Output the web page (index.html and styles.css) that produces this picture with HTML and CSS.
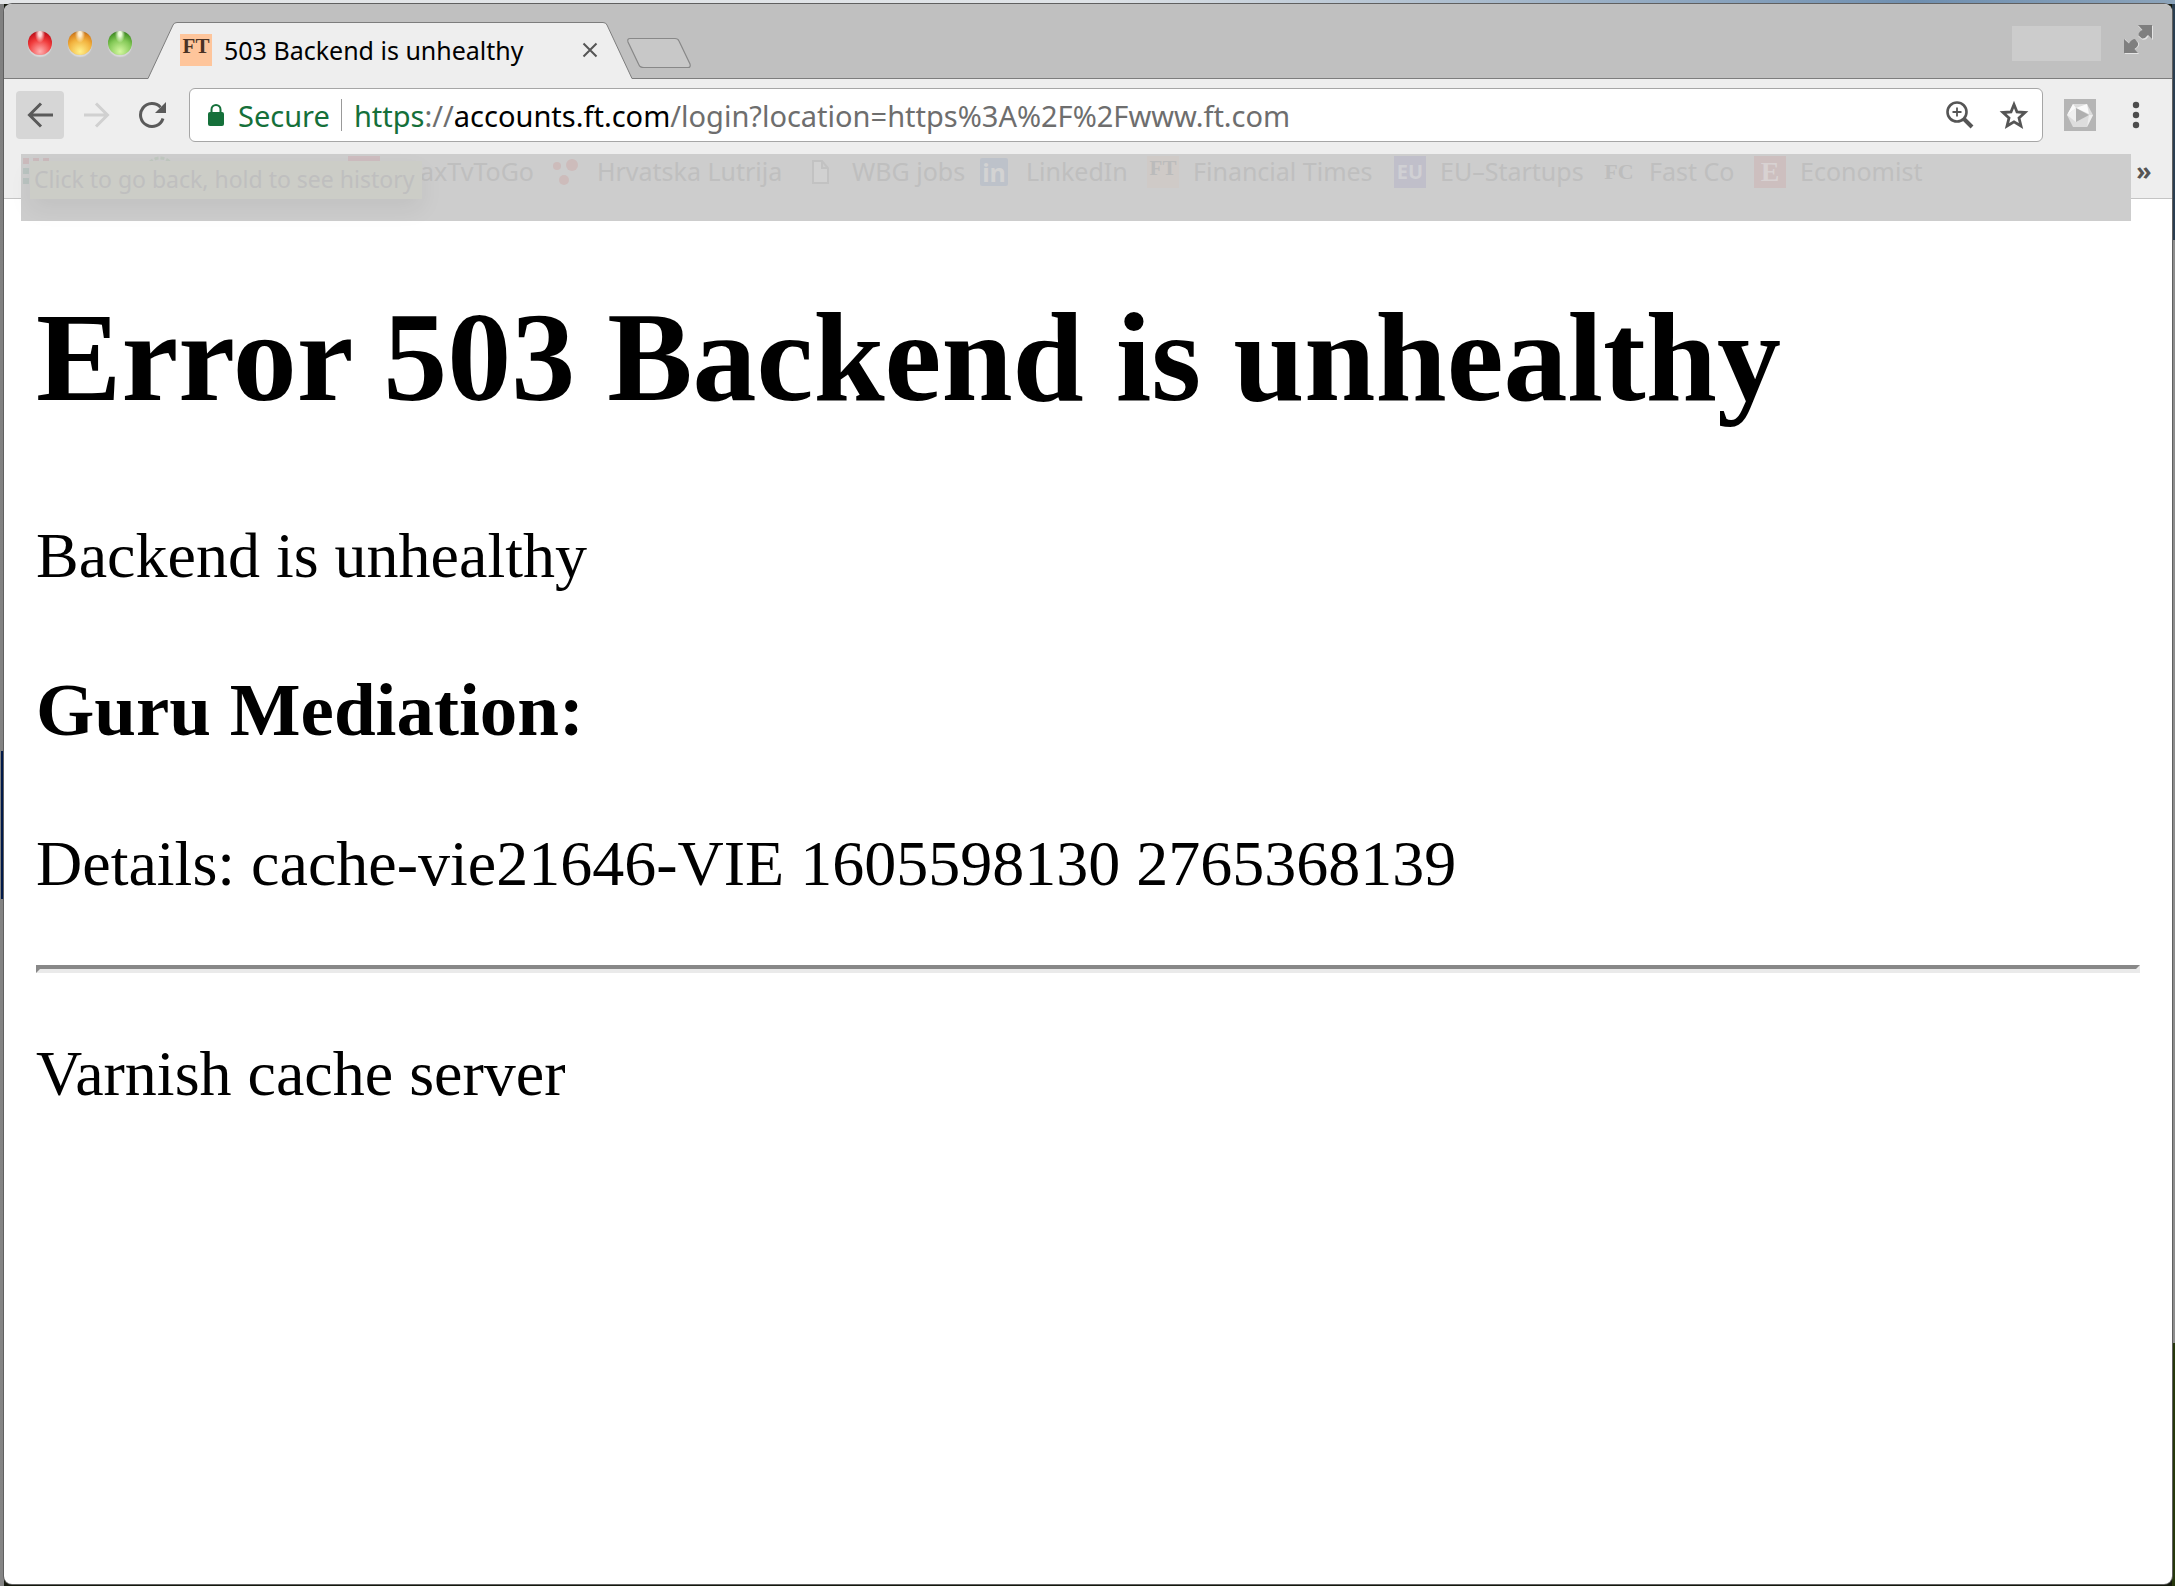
FILE: index.html
```html
<!DOCTYPE html>
<html lang="en">
<head>
<meta charset="utf-8">
<title>503 Backend is unhealthy</title>
<link rel="stylesheet" href="styles.css">
</head>
<body>
<div class="window">
  <header class="tabstrip">
    <div class="lights">
      <button class="light red" aria-label="Close window"></button>
      <button class="light amber" aria-label="Minimize window"></button>
      <button class="light green" aria-label="Zoom window"></button>
    </div>
    <div class="tab">
      <svg class="tab-shape" viewBox="0 0 486 57" preserveAspectRatio="none" aria-hidden="true"><path d="M0 56.5H1L26 3Q27 .5 30 .5H456Q459 .5 460 3L485 56.5H486V57H0Z" fill="#eee"/><path d="M0 56.5H1L26 3Q27 .5 30 .5H456Q459 .5 460 3L485 56.5H486" fill="none" stroke="#7d7d7d"/></svg>
      <span class="favicon">FT</span>
      <span class="tab-title">503 Backend is unhealthy</span>
      <button class="tab-close" aria-label="Close tab"><svg width="16" height="16" viewBox="0 0 16 16"><path d="M1.500 1.500 14.500 14.500M14.500 1.500 1.500 14.500" stroke="#555" stroke-width="2"/></svg></button>
    </div>
    <button class="new-tab" aria-label="New tab"><svg width="68" height="34" viewBox="0 0 68 34"><path d="M5 2.500H50Q53 2.500 54 5L65 28Q66 31.500 63 31.500H19Q15 31.500 14 29L3 6Q2 2.500 5 2.500Z" fill="#c8c8c8" stroke="#888" stroke-width="1.200"/></svg></button>
    <span class="profile"></span>
    <button class="fullscreen" aria-label="Full screen"><svg width="30" height="30" viewBox="0 0 30 30"><path d="M14 1H29V15L24.500 11Q22 16 18 14.500L14.500 11.500Q14 7.500 18.500 5.500Z M1 14V29H15L11 24.500Q16 21 15 18L11 14.500Q7.500 15 5.500 18.500Z" fill="#e4e4e4"/><path d="M14 0H28V14L24 10Q21 14 18 13.500L14.500 10.500Q14 7 18.500 5Z M0 14V28H14L10.500 24Q15 21 14 18L11 14Q7.500 14 5 18.500Z" fill="#7f7f7f"/></svg></button>
  </header>

  <div class="toolbar">
    <button class="nav-button active" aria-label="Back"><svg width="28" height="28" viewBox="0 0 28 28"><path d="M27 14H4M15 2.500 3.500 14 15 25.500" fill="none" stroke="#5a5a5a" stroke-width="3"/></svg></button>
    <button class="nav-button" aria-label="Forward"><svg width="28" height="28" viewBox="0 0 28 28"><path d="M2 14H25M14 2.500 25.500 14 14 25.500" fill="none" stroke="#d0d0d0" stroke-width="3"/></svg></button>
    <button class="nav-button" aria-label="Reload"><svg width="28" height="28" viewBox="0 0 28 28"><path d="M22.500 6.200A11.500 11.500 0 1 0 25 17.500" fill="none" stroke="#5a5a5a" stroke-width="3"/><path d="M28 1V12H17Z" fill="#5a5a5a"/></svg></button>
    <div class="omnibox">
      <svg width="16" height="22" viewBox="0 0 16 22" aria-hidden="true"><path d="M3.500 9V5.500a4.500 4.500 0 0 1 9 0V9" fill="none" stroke="#15703a" stroke-width="2"/><rect y="8" width="16" height="14" rx="2" fill="#15703a"/></svg>
      <span class="secure">Secure</span>
      <span class="divider"></span>
      <a class="url" href="#"><span class="scheme">https</span>://<span class="host">accounts.ft.com</span>/login?location=https%3A%2F%2Fwww.ft.com</a>
      <button class="box-button" aria-label="Zoom"><svg width="28" height="28" viewBox="0 0 28 28"><circle cx="11" cy="11" r="9.500" fill="none" stroke="#555" stroke-width="2.600"/><path d="M11 6.500V15.500M6.500 11H15.500" stroke="#555" stroke-width="1.800"/><path d="M17.500 17.500 26 26" stroke="#555" stroke-width="4"/></svg></button>
      <button class="box-button" aria-label="Bookmark this page"><svg width="30" height="30" viewBox="0 0 30 30"><path d="M15 4.500 18 12 26 12.500 20 18 22 26 15 21.800 8 26 10 18 4 12.500 12 12Z" fill="none" stroke="#555" stroke-width="2.800"/></svg></button>
    </div>
    <button class="extension" aria-label="Extension"><svg width="32" height="32" viewBox="0 0 32 32"><path fill="#b5b5b5" d="M0 0H32V32H0Z"/><path d="M9 5H23L29 16 23 28H9L3 16Z" fill="#ddd"/><path d="M9 5 3 16 12 9Z M12 9 23 5 25 15Z" fill="#fafafa"/><path d="M12 9V23L3 16Z" fill="#f0f0f0"/><path d="M12 9 25 16 12 23Z" fill="#b0b0b0"/><path d="M25 16 29 16 23 28Z" fill="#eee"/></svg></button>
    <button class="menu" aria-label="Menu"><svg width="8" height="28" viewBox="0 0 8 28"><g fill="#4d4d4d"><circle cx="4" cy="4" r="3.200"/><circle cx="4" cy="14" r="3.200"/><circle cx="4" cy="24" r="3.200"/></g></svg></button>
  </div>

  <div class="bookmark-row">
    <nav class="bookmarks" aria-label="Bookmarks">
      <a class="bookmark first" href="#"><svg class="apps" width="28" height="28" viewBox="0 0 28 28"><path fill="#cbbabc" d="M0 0H6V6H0ZM10 0H16V6H10ZM20 0H26V6H20Z"/><path fill="#b9c3c0" d="M0 10H6V16H0ZM0 20H6V26H0Z"/></svg><svg class="ring" width="32" height="32" viewBox="0 0 32 32"><circle cx="16" cy="16" r="14" fill="none" stroke="#bfc7bf" stroke-width="3" stroke-dasharray="4 2"/></svg><span class="red-block"></span>axTvToGo</a>
      <a class="bookmark" href="#"><svg width="32" height="32" viewBox="0 0 32 32"><g fill="#cdbcbb"><circle cx="6" cy="10" r="4"/><circle cx="21" cy="9" r="6"/><circle cx="13" cy="24" r="5"/></g></svg>Hrvatska Lutrija</a>
      <a class="bookmark" href="#"><svg width="32" height="32" viewBox="0 0 32 32"><path d="M7 5H16L22 12V27H7ZM16 5V12H22" fill="#d1d1d1" stroke="#c2c2c2" stroke-width="2"/></svg>WBG jobs</a>
      <a class="bookmark" href="#"><span class="icon linkedin">in</span>LinkedIn</a>
      <a class="bookmark" href="#"><span class="icon ft">FT</span>Financial Times</a>
      <a class="bookmark" href="#"><span class="icon eu">EU</span>EU–Startups</a>
      <a class="bookmark" href="#"><span class="icon fc">FC</span>Fast Co</a>
      <a class="bookmark" href="#"><span class="icon economist">E</span>Economist</a>
      <span class="tooltip" role="tooltip">Click to go back, hold to see history</span>
    </nav>
    <button class="overflow" aria-label="More bookmarks">»</button>
  </div>

  <main class="page">
    <h1>Error 503 Backend is unhealthy</h1>
    <p>Backend is unhealthy</p>
    <h3>Guru Mediation:</h3>
    <p>Details: cache-vie21646-VIE 1605598130 2765368139</p>
    <hr>
    <p>Varnish cache server</p>
  </main>
</div>
</body>
</html>
```
FILE: styles.css
```css
* { box-sizing: border-box; }

body {
  margin: 0;
  min-height: 100vh;
  padding: 4px 3px 2px 4px;
  display: flex;
  background:
    linear-gradient(90deg, #e4e6e8 0%, #dfe3e7 50%, #6f8fb0 88%, #8ba3ba 100%) top / 100% 4px no-repeat,
    linear-gradient(#001a4a, #001a4a) 1px 751px / 2px 148px no-repeat,
    linear-gradient(#808080, #858585) left / 4px 100% no-repeat,
    linear-gradient(#2b3e50 0 240px, #8e8e8e 240px 1343px, #26380c 1343px) right / 3px 100% no-repeat,
    #14180c;
  font-family: "Noto Sans", "Open Sans", sans-serif;
  font-size: 25px;
}

button {
  margin: 0;
  padding: 0;
  border: 0;
  background: none;
  font: inherit;
  display: flex;
  align-items: center;
  justify-content: center;
  flex: none;
}

a { color: inherit; text-decoration: none; }
svg { display: block; flex: none; }

.window {
  flex: 1;
  display: flex;
  flex-direction: column;
  background: #fff;
  border-radius: 8px;
  box-shadow: 0 0 0 1px #606060;
}

/* Tab strip */
.tabstrip {
  height: 75px;
  display: flex;
  align-items: flex-end;
  padding: 0 18px 0 24px;
  background: #c0c0c0;
  border-bottom: 1px solid #7d7d7d;
  border-radius: 8px 8px 0 0;
}

.lights { display: flex; gap: 16px; margin-bottom: 23px; }

.light {
  width: 24px;
  height: 24px;
  border-radius: 50%;
  box-shadow: 0 2px 1px #d8d8d8;
}
.red { background: radial-gradient(ellipse at 50% 12%, #ffd8d8 0 8%, transparent 30%), radial-gradient(circle at 50% 85%, #ffb0b0 0, #f03b3b 50%, #cc1620 75%, #7c1616 100%); }
.amber { background: radial-gradient(ellipse at 50% 12%, #fff0d0 0 8%, transparent 30%), radial-gradient(circle at 50% 85%, #fff08a 0, #f2b23e 50%, #d98420 75%, #7c4c16 100%); }
.green { background: radial-gradient(ellipse at 50% 12%, #efffdc 0 8%, transparent 30%), radial-gradient(circle at 50% 85%, #d4f7a0 0, #84c957 50%, #4d9a2c 75%, #23501a 100%); }

.tab {
  position: relative;
  width: 486px;
  height: 57px;
  margin: 0 0 -1px 15px;
  padding: 0 35px 1px 33px;
  display: flex;
  align-items: center;
}
.tab-shape { position: absolute; inset: 0; width: 100%; height: 100%; }

.favicon {
  position: relative;
  width: 32px;
  height: 32px;
  background: #fec59b;
  color: #4a3224;
  font: bold 21px/24px "Liberation Serif", serif;
  text-align: center;
}
.tab-title { position: relative; flex: 1; margin-left: 12px; color: #000; white-space: nowrap; line-height: 32px; }
.tab-close { position: relative; }
.new-tab { margin: 0 0 8px -8px; }
.profile { width: 89px; height: 35px; margin: 0 23px 17px auto; background: #ccc; }
.fullscreen { margin-bottom: 23px; }

/* Toolbar */
.toolbar {
  display: flex;
  align-items: center;
  height: 75px;
  padding: 0 32px 3px 12px;
  gap: 8px;
  background: #eee;
}
.nav-button { width: 48px; height: 48px; border-radius: 4px; }
.nav-button.active { background: #d6d6d6; }

.omnibox {
  flex: 1;
  height: 54px;
  margin-left: 5px;
  padding: 0 13px 0 18px;
  display: flex;
  align-items: center;
  background: #fff;
  border: 1px solid #a6a6a6;
  border-radius: 6px;
  font-size: 29px;
  color: #6e6e6e;
}
.secure { margin-left: 14px; color: #15703a; }
.divider { width: 1px; height: 32px; margin: 0 12px 0 11px; background: #999; }
.url { flex: 1; white-space: nowrap; }
.scheme { color: #15703a; }
.host { color: #000; }
.box-button { margin-left: 25px; }
.extension { margin-left: 13px; }
.menu { margin-left: 28px; }

/* Bookmark bar, hidden behind a pale cover that runs over the page's top edge */
.bookmark-row {
  height: 45px;
  display: flex;
  align-items: flex-start;
  padding-left: 17px;
  background: #eee;
  border-bottom: 1px solid #c4c4c4;
}
.bookmarks {
  position: relative;
  flex: 1;
  height: 67px;
  padding-top: 2px;
  display: grid;
  grid-template-columns: 530px 255px 174px 167px 247px 209px 151px 1fr;
  align-items: start;
  background: #cdcdcd;
  color: #bfbfbf;
}
.bookmark { display: flex; align-items: flex-start; gap: 14px; line-height: 30px; white-space: nowrap; }
.bookmark.first { position: relative; justify-content: flex-end; padding-right: 17px; }
.apps { position: absolute; left: 2px; top: 2px; }
.ring { position: absolute; left: 123px; top: 0; }
.red-block { position: absolute; left: 327px; top: 0; width: 32px; height: 32px; background: #cdbcbf; }

.icon { width: 32px; height: 32px; text-align: center; line-height: 32px; }
.linkedin { background: #bdc2ca; color: #d3d3d3; font-weight: 700; line-height: 28px; width: 28px; height: 28px; margin: 2px 4px 0 0; border-radius: 2px; }
.ft { background: #cfcac7; color: #bbb; font: bold 21px/24px "Liberation Serif", serif; }
.eu { background: #c0bfca; color: #d0d0d4; font-weight: 700; font-size: 20px; }
.fc { color: #bdbdbd; font: bold 22px/32px "Liberation Serif", serif; }
.economist { background: #cdbfbf; color: #d8d2d2; font: bold 28px/32px "Liberation Serif", serif; }

.tooltip {
  position: absolute;
  left: 9px;
  top: 7px;
  width: 392px;
  height: 38px;
  padding-left: 4px;
  line-height: 36px;
  white-space: nowrap;
  background: #cccdc7;
  color: #bfbfbf;
  font-size: 23px;
  box-shadow: 0 10px 24px rgba(0, 0, 0, .06);
}
.overflow { width: 41px; height: 34px; padding: 0 15px 2px 0; color: #555; font-size: 25px; font-weight: 700; }

/* Error page at 400% zoom */
.page {
  flex: 1;
  padding: 0 32px;
  color: #000;
  font-family: "Liberation Serif", "Times New Roman", serif;
  font-size: 64px;
  line-height: 74px;
}
h1 { margin: 84px 0 88px; font-size: 128px; line-height: 148px; }
p { margin: 64px 0; }
h3 { margin: 74px 0; font-size: 75px; line-height: 86px; }
hr { height: 8px; margin: 64px 0; border: 4px solid; border-color: #888 #eaeaea #eaeaea #888; }
```
